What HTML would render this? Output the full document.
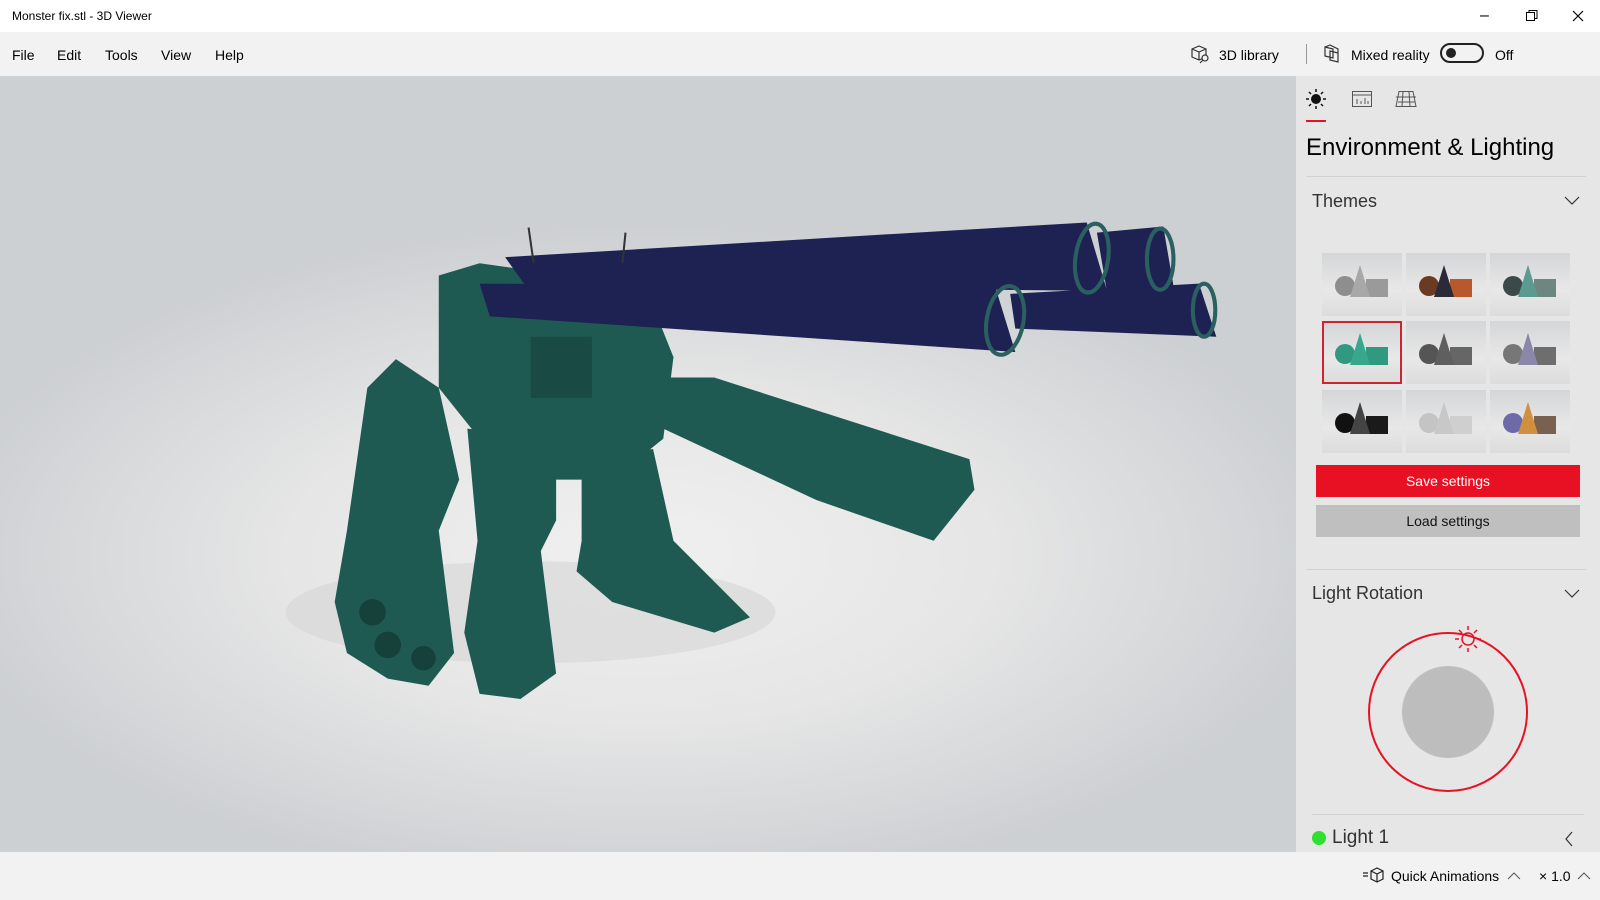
<!DOCTYPE html>
<html><head><meta charset="utf-8"><style>
*{margin:0;padding:0;box-sizing:border-box}
body{width:1600px;height:900px;overflow:hidden;font-family:"Liberation Sans",sans-serif;background:#fff;position:relative;color:#000}
.abs{position:absolute}
#title{left:0;top:0;width:1600px;height:32px;background:#fff;font-size:12px;line-height:32px;padding-left:12px}
#menu{left:0;top:32px;width:1600px;height:44px;background:#f2f2f2;font-size:14px}
#menu span{position:absolute;top:15px}
#view{left:0;top:76px;width:1296px;height:776px;background:radial-gradient(ellipse 700px 330px at 640px 480px,#f0f0f0 0%,#e6e6e6 50%,#cdd0d3 100%)}
#panel{left:1296px;top:76px;width:304px;height:776px;background:#e6e6e6}
#bottom{left:0;top:852px;width:1600px;height:48px;background:#f2f2f2;font-size:14px}
.tile{position:absolute;width:80px;height:63px;background:linear-gradient(#d4d6d8,#e8e8e8 60%,#dcdcdc)}
</style></head><body>
<div id="title" class="abs">Monster fix.stl - 3D Viewer
<span class="abs" style="left:1480px;top:0;font-size:16px">&#8211;</span>
<svg class="abs" style="left:1526px;top:10px" width="12" height="12"><rect x="0.5" y="2.5" width="8" height="8" fill="none" stroke="#000"/><path d="M3 2.5V0.5h8v8H9" fill="none" stroke="#000"/></svg>
<svg class="abs" style="left:1572px;top:10px" width="12" height="12"><path d="M1 1L11 11M11 1L1 11" stroke="#000" stroke-width="1.2"/></svg>
</div>
<div id="menu" class="abs">
<span style="left:12px">File</span><span style="left:57px">Edit</span><span style="left:105px">Tools</span><span style="left:161px">View</span><span style="left:215px">Help</span>
<svg class="abs" style="left:1190px;top:12px" width="22" height="20" fill="none" stroke="#333" stroke-width="1.2"><path d="M2 5l7-3 7 3v8l-7 3-7-3z M2 5l7 3 7-3 M9 8v8"/><circle cx="15" cy="14" r="3" fill="#f2f2f2"/><path d="M13 16l-3 3"/></svg>
<span style="left:1219px">3D library</span>
<div class="abs" style="left:1306px;top:12px;width:1px;height:20px;background:#999"></div>
<svg class="abs" style="left:1323px;top:12px" width="20" height="20" fill="none" stroke="#333" stroke-width="1.2"><path d="M2 3l8 2v9l-8-2z M7 7l8 2v9l-8-2z M2 3l5-2 8 4v4"/></svg>
<span style="left:1351px">Mixed reality</span>
<div class="abs" style="left:1440px;top:11px;width:44px;height:20px;border:2px solid #222;border-radius:10px"><div class="abs" style="left:4px;top:3px;width:10px;height:10px;border-radius:50%;background:#222"></div></div>
<span style="left:1495px">Off</span>
</div>
<div id="view" class="abs"></div>
<svg class="abs" style="left:0;top:0" width="1296" height="852">
<g transform="scale(1.0204)">
<ellipse cx="520" cy="600" rx="240" ry="50" fill="#d6d6d6" opacity="0.6"/>
<g fill="#1f5a52">
<polygon points="360,380 388,352 430,380 450,470 430,520 445,640 420,672 380,665 340,640 328,590 340,520"/>
<polygon points="430,270 470,258 520,265 640,300 660,350 650,430 600,470 540,470 470,430 430,380"/>
<polygon points="458,420 545,430 545,510 530,540 545,660 510,685 470,680 455,620 468,530"/>
<polygon points="570,450 640,440 660,530 700,570 735,605 700,620 600,590 565,560 570,530"/>
<polygon points="650,370 700,370 950,450 955,480 915,530 800,490 650,420"/>
</g>
<g fill="#16403a"><circle cx="365" cy="600" r="13"/><circle cx="380" cy="632" r="13"/><circle cx="415" cy="645" r="12"/><rect x="520" y="330" width="60" height="60" opacity="0.6"/></g>
<g fill="#1e2252">
<polygon points="495,252 1065,218 1085,285 515,280"/>
<polygon points="1075,228 1140,222 1150,280 1085,287"/>
<polygon points="470,278 975,280 995,345 480,310"/>
<polygon points="990,288 1175,278 1192,330 995,322"/>
</g>
<g fill="none" stroke="#2a6060" stroke-width="4"><ellipse cx="1070" cy="253" rx="16" ry="34" transform="rotate(8 1070 253)"/><ellipse cx="1137" cy="254" rx="13" ry="30"/><ellipse cx="985" cy="314" rx="18" ry="34" transform="rotate(10 985 314)"/><ellipse cx="1180" cy="304" rx="11" ry="26"/></g>
<path d="M518 223l5 35M613 228l-3 30" stroke="#333" stroke-width="2"/>
</g></svg>
<div id="panel" class="abs">
<svg class="abs" style="left:10px;top:13px" width="20" height="20"><circle cx="10" cy="10" r="5" fill="#111"/><path d="M10 0v3M10 17v3M0 10h3M17 10h3M3 3l2 2M15 15l2 2M3 17l2-2M15 5l2-2" stroke="#111" stroke-width="1.5"/></svg>
<div class="abs" style="left:10px;top:44px;width:20px;height:2px;background:#e81123"></div>
<svg class="abs" style="left:55px;top:14px" width="22" height="18" fill="none" stroke="#555"><rect x="1.5" y="1.5" width="19" height="15"/><path d="M1.5 5h19M6 14v-5M10 14v-3M14 14v-6M17 14v-3"/></svg>
<svg class="abs" style="left:99px;top:14px" width="22" height="18" fill="none" stroke="#555"><path d="M4 1.5h14l3 15H1z M1 7h20M3 12h17M8 1.5L7 16.5M14 1.5l1 15"/></svg>
<div class="abs" style="left:10px;top:58px;font-size:24px">Environment &amp; Lighting</div>
<div class="abs" style="left:10px;top:100px;width:280px;height:1px;background:#d2d2d2"></div>
<div class="abs" style="left:16px;top:115px;font-size:18px;color:#333">Themes</div>
<svg class="abs" style="left:268px;top:120px" width="16" height="10"><path d="M1 1l7 7 7-7" fill="none" stroke="#333" stroke-width="1.2"/></svg>
</div>
<div class="tile" style="left:1322px;top:253px"></div><div class="tile" style="left:1406px;top:253px"></div><div class="tile" style="left:1490px;top:253px"></div>
<div class="tile" style="left:1322px;top:321px;border:2px solid #d1222f"></div><div class="tile" style="left:1406px;top:321px"></div><div class="tile" style="left:1490px;top:321px"></div>
<div class="tile" style="left:1322px;top:390px"></div><div class="tile" style="left:1406px;top:390px"></div><div class="tile" style="left:1490px;top:390px"></div>
<svg class="abs" style="left:1322px;top:253px" width="248" height="200">
<g id="sh"></g>
<g><circle cx="23" cy="33" r="10" fill="#8e8e8e"/><rect x="44" y="26" width="22" height="18" fill="#9a9a9a"/><polygon points="38,12 28,44 48,44" fill="#a8a8a8"/></g>
<g transform="translate(84 0)"><circle cx="23" cy="33" r="10" fill="#6b3a22"/><rect x="44" y="26" width="22" height="18" fill="#b8582c"/><polygon points="38,12 28,44 48,44" fill="#2a2a38"/></g>
<g transform="translate(168 0)"><circle cx="23" cy="33" r="10" fill="#3a4a48"/><rect x="44" y="26" width="22" height="18" fill="#6e8680"/><polygon points="38,12 28,44 48,44" fill="#5a9a90"/></g>
<g transform="translate(0 68)"><circle cx="23" cy="33" r="10" fill="#2f9a80"/><rect x="44" y="26" width="22" height="18" fill="#2f9a80"/><polygon points="38,12 28,44 48,44" fill="#37a88c"/></g>
<g transform="translate(84 68)"><circle cx="23" cy="33" r="10" fill="#555"/><rect x="44" y="26" width="22" height="18" fill="#666"/><polygon points="38,12 28,44 48,44" fill="#5f5f5f"/></g>
<g transform="translate(168 68)"><circle cx="23" cy="33" r="10" fill="#777"/><rect x="44" y="26" width="22" height="18" fill="#6e6e6e"/><polygon points="38,12 28,44 48,44" fill="#8a88a8"/></g>
<g transform="translate(0 137)"><circle cx="23" cy="33" r="10" fill="#111"/><rect x="44" y="26" width="22" height="18" fill="#1a1a1a"/><polygon points="38,12 28,44 48,44" fill="#444"/></g>
<g transform="translate(84 137)"><circle cx="23" cy="33" r="10" fill="#c4c4c4"/><rect x="44" y="26" width="22" height="18" fill="#cfcfcf"/><polygon points="38,12 28,44 48,44" fill="#c8c8c8"/></g>
<g transform="translate(168 137)"><circle cx="23" cy="33" r="10" fill="#6d6aa8"/><rect x="44" y="26" width="22" height="18" fill="#7a6050"/><polygon points="38,12 28,44 48,44" fill="#d09040"/></g>
</svg>
<div class="abs" style="left:1316px;top:465px;width:264px;height:32px;background:#e81123;color:#fff;font-size:14px;text-align:center;line-height:32px">Save settings</div>
<div class="abs" style="left:1316px;top:505px;width:264px;height:32px;background:#bfbfbf;color:#111;font-size:14px;text-align:center;line-height:32px">Load settings</div>
<div class="abs" style="left:1306px;top:569px;width:280px;height:1px;background:#d2d2d2"></div>
<div class="abs" style="left:1312px;top:583px;font-size:18px;color:#333">Light Rotation</div>
<svg class="abs" style="left:1564px;top:589px" width="16" height="10"><path d="M1 1l7 7 7-7" fill="none" stroke="#333" stroke-width="1.2"/></svg>
<svg class="abs" style="left:1360px;top:620px" width="180" height="180">
<circle cx="88" cy="92" r="79" fill="none" stroke="#e81123" stroke-width="2"/>
<circle cx="88" cy="92" r="46" fill="#bdbdbd"/>
<g transform="translate(108 19)" stroke="#e81123" stroke-width="1.5" fill="none"><circle r="6"/><path d="M0-13v4M0 9v4M-13 0h4M9 0h4M-9-9l3 3M6 6l3 3M-9 9l3-3M6-6l3-3"/></g>
</svg>
<div class="abs" style="left:1312px;top:814px;width:272px;height:1px;background:#d2d2d2"></div>
<div class="abs" style="left:1312px;top:831px;width:14px;height:14px;border-radius:50%;background:#2fe02f"></div>
<div class="abs" style="left:1332px;top:827px;font-size:19px;color:#333">Light 1</div>
<svg class="abs" style="left:1564px;top:831px" width="10" height="16"><path d="M8 1L2 8l6 7" fill="none" stroke="#333" stroke-width="1.2"/></svg>
<div id="bottom" class="abs">
<svg class="abs" style="left:1363px;top:15px" width="22" height="18" fill="none" stroke="#222" stroke-width="1.2"><path d="M0 6h5M0 9h5M8 4l6-3 6 3v8l-6 3-6-3z M8 4l6 3 6-3 M14 7v8"/></svg>
<span class="abs" style="left:1391px;top:16px">Quick Animations</span>
<svg class="abs" style="left:1507px;top:20px" width="14" height="8"><path d="M1 7l6-6 6 6" fill="none" stroke="#555"/></svg>
<span class="abs" style="left:1539px;top:16px">× 1.0</span>
<svg class="abs" style="left:1577px;top:20px" width="14" height="8"><path d="M1 7l6-6 6 6" fill="none" stroke="#555"/></svg>
</div>
</body></html>
